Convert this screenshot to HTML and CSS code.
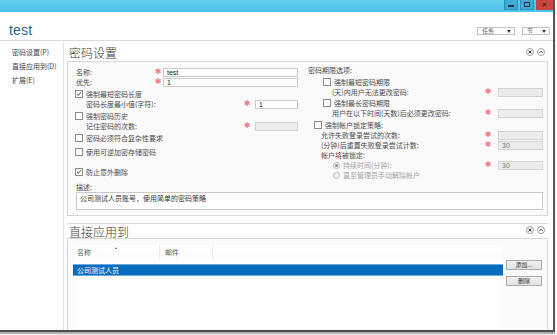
FILE: index.html
```html
<!DOCTYPE html>
<html lang="zh">
<head>
<meta charset="utf-8">
<link rel="stylesheet" href="styles.css">
</head>
<body>
<div class="window">
  <div class="titlebar">
    <div class="wbtn wmin"><span class="minbar"></span></div>
    <div class="wbtn wmax"><span class="maxbox"></span></div>
    <div class="wbtn wclose">&#x2715;</div>
  </div>
  <div class="header">
    <div class="title">test</div>
    <div class="drops">
      <div class="drop drop-task"><span>任务</span><span class="tri"></span></div>
      <div class="drop drop-sec"><span>节</span><span class="tri"></span></div>
    </div>
  </div>
  <div class="content">
    <nav class="nav">
      <div class="nav-item">密码设置(P)</div>
      <div class="nav-item">直接应用到(D)</div>
      <div class="nav-item">扩展(E)</div>
    </nav>
    <main class="main">
      <div class="sec-head sec-head-1">
        <h2 class="sec-title">密码设置</h2>
        <div class="sec-icons">
          <svg class="ic" viewBox="0 0 8 8"><circle cx="4" cy="4" r="3.5" fill="#fff" stroke="#8a8a8a" stroke-width="0.8"/><path d="M2.6 2.6 L5.4 5.4 M5.4 2.6 L2.6 5.4" stroke="#333" stroke-width="1"/></svg>
          <svg class="ic" viewBox="0 0 8 8"><circle cx="4" cy="4" r="3.5" fill="#fff" stroke="#8a8a8a" stroke-width="0.8"/><path d="M2.5 4.9 L4 3.2 L5.5 4.9" fill="none" stroke="#333" stroke-width="0.9"/></svg>
        </div>
      </div>
      <section class="box box-1">
        <div class="form-grid">
          <div class="col-left">
            <div class="row r-first">
              <span class="lbl">名称:</span><span class="star">&#x2731;</span><span class="inp inp-wide">test</span>
            </div>
            <div class="row">
              <span class="lbl">优先:</span><span class="star">&#x2731;</span><span class="inp inp-wide">1</span>
            </div>
            <div class="row mt2">
              <span class="cb checked"><svg viewBox="0 0 8 8"><path d="M1.4 4.1 L3.1 5.9 L6.6 1.7" fill="none" stroke="#333" stroke-width="1.2"/></svg></span><span class="cb-lbl">强制最短密码长度</span>
            </div>
            <div class="row">
              <span class="lbl ind">密码长度最小值(字符):</span><span class="star star-l">&#x2731;</span><span class="inp inp-small">1</span>
            </div>
            <div class="row mt2">
              <span class="cb"></span><span class="cb-lbl">强制密码历史</span>
            </div>
            <div class="row">
              <span class="lbl ind">记住密码的次数:</span><span class="star star-l">&#x2731;</span><span class="inp inp-small dis"></span>
            </div>
            <div class="row mt2">
              <span class="cb"></span><span class="cb-lbl">密码必须符合复杂性要求</span>
            </div>
            <div class="row mt4">
              <span class="cb"></span><span class="cb-lbl">使用可逆加密存储密码</span>
            </div>
            <div class="row mt10">
              <span class="cb checked"><svg viewBox="0 0 8 8"><path d="M1.4 4.1 L3.1 5.9 L6.6 1.7" fill="none" stroke="#333" stroke-width="1.2"/></svg></span><span class="cb-lbl">防止意外删除</span>
            </div>
            <div class="row mt5">
              <span class="lbl">描述:</span>
            </div>
          </div>
          <div class="col-right">
            <div class="row"><span class="lbl">密码期限选项:</span></div>
            <div class="row mt2 ind15">
              <span class="cb"></span><span class="cb-lbl">强制最短密码期限</span>
            </div>
            <div class="row">
              <span class="lbl ind24">(天)内用户无法更改密码:</span><span class="star star-r">&#x2731;</span><span class="inp inp-r dis"></span>
            </div>
            <div class="row mt1 ind15">
              <span class="cb"></span><span class="cb-lbl">强制最长密码期限</span>
            </div>
            <div class="row">
              <span class="lbl ind24">用户在以下时间(天数)后必须更改密码:</span><span class="star star-r">&#x2731;</span><span class="inp inp-r dis"></span>
            </div>
            <div class="row mt2 ind6">
              <span class="cb"></span><span class="cb-lbl">强制帐户锁定策略:</span>
            </div>
            <div class="row">
              <span class="lbl ind13">允许失败登录尝试的次数:</span><span class="star star-r">&#x2731;</span><span class="inp inp-r dis"></span>
            </div>
            <div class="row">
              <span class="lbl ind13">(分钟)后重置失败登录尝试计数:</span><span class="star star-r">&#x2731;</span><span class="inp inp-r dis">30</span>
            </div>
            <div class="row">
              <span class="lbl ind13">帐户将被锁定:</span>
            </div>
            <div class="row ind25">
              <span class="rb on"></span><span class="rb-lbl">持续时间(分钟):</span><span class="star star-r">&#x2731;</span><span class="inp inp-r dis">30</span>
            </div>
            <div class="row ind25">
              <span class="rb"></span><span class="rb-lbl">直至管理员手动解除帐户</span>
            </div>
          </div>
          <div class="desc">公司测试人员账号，使用简单的密码策略</div>
        </div>
      </section>
      <div class="sec-head sec-head-2">
        <h2 class="sec-title">直接应用到</h2>
        <div class="sec-icons">
          <svg class="ic" viewBox="0 0 8 8"><circle cx="4" cy="4" r="3.5" fill="#fff" stroke="#8a8a8a" stroke-width="0.8"/><path d="M2.6 2.6 L5.4 5.4 M5.4 2.6 L2.6 5.4" stroke="#333" stroke-width="1"/></svg>
          <svg class="ic" viewBox="0 0 8 8"><circle cx="4" cy="4" r="3.5" fill="#fff" stroke="#8a8a8a" stroke-width="0.8"/><path d="M2.5 4.9 L4 3.2 L5.5 4.9" fill="none" stroke="#333" stroke-width="0.9"/></svg>
        </div>
      </div>
      <section class="box box-2">
        <div class="list">
          <div class="list-head">
            <div class="lh lh-name">名称<span class="sort"></span></div>
            <div class="lh lh-mail">邮件</div>
            <div class="lh lh-rest"></div>
          </div>
          <div class="list-row sel">公司测试人员</div>
        </div>
        <div class="btns">
          <div class="btn btn-add">添加...</div>
          <div class="btn">删除</div>
        </div>
      </section>
    </main>
  </div>
</div>
</body>
</html>
```

FILE: styles.css
```css
* { box-sizing: border-box; }
html, body { margin: 0; padding: 0; }
body {
  width: 557px;
  height: 335px;
  overflow: hidden;
  background: #fff;
  font-family: "Noto Sans CJK SC", "Noto Sans", sans-serif;
  font-size: 7px;
  color: #4a4a4a;
}
.window {
  width: 555px;
  height: 332px;
  border-right: 2px solid #555;
  border-bottom: 2px solid #4a4a4a;
  box-shadow: 0 2px 1px #b0b0b0;
  display: flex;
  flex-direction: column;
  background: #fff;
}
.titlebar {
  height: 12px;
  flex: none;
  background: linear-gradient(#63cdef, #4cc1e8);
  display: flex;
  justify-content: flex-end;
  align-items: flex-start;
  gap: 2px;
}
.wbtn {
  height: 10px;
  display: flex;
  align-items: center;
  justify-content: center;
}
.wmin, .wmax {
  width: 14px;
  background: #3aaed6;
  border: 1px solid #2a8fb5;
  border-top: none;
}
.minbar { width: 6px; height: 2px; background: #1c3440; margin-top: 3px; }
.maxbox { width: 6px; height: 5px; border: 1.5px solid #1c3440; }
.wclose {
  width: 17px;
  background: #c9473e;
  color: #3a1210;
  font-family: "DejaVu Sans", sans-serif;
  font-size: 7px;
  font-weight: bold;
  line-height: 10px;
}
.header {
  height: 29px;
  flex: none;
  border-bottom: 1px solid #dcdcdc;
  display: flex;
  justify-content: space-between;
  align-items: flex-start;
  padding: 0 3px 0 9px;
}
.title {
  font-family: "Liberation Sans", sans-serif;
  font-size: 14px;
  line-height: 16px;
  margin-top: 10px;
  color: #26698f;
  letter-spacing: 0.2px;
}
.drops { display: flex; gap: 7px; margin-top: 15px; }
.drop {
  height: 8px;
  border: 1px solid #c4c4c4;
  background: #fff;
  display: flex;
  align-items: center;
  justify-content: space-between;
  padding: 0 3px 0 4px;
  font-size: 6px;
  line-height: 6px;
  color: #666;
}
.drop-task { width: 38px; }
.drop-sec { width: 28px; }
.tri {
  width: 0; height: 0;
  border-left: 2.5px solid transparent;
  border-right: 2.5px solid transparent;
  border-top: 3px solid #333;
}
.content { flex: 1; display: flex; min-height: 0; }
.nav {
  width: 64px;
  flex: none;
  border-right: 1px solid #e2e2e2;
  padding: 4px 0 0 12px;
}
.nav-item { line-height: 14px; height: 14px; color: #444; white-space: nowrap; }
.main {
  flex: 1;
  display: flex;
  flex-direction: column;
  padding: 0 5px 0 3px;
  min-width: 0;
}
.sec-head {
  display: flex;
  justify-content: space-between;
  align-items: center;
  flex: none;
}
.sec-head-1 { height: 20px; padding: 4px 0 0 2px; }
.sec-head-2 {
  height: 15px;
  margin-top: 7px;
  border-top: 1px solid #dedede;
  padding: 0 0 0 2px;
}
.sec-title {
  margin: 0;
  font-size: 12px;
  font-weight: 300;
  line-height: 14px;
  color: #3a3a3a;
}
.sec-head-2 .sec-title { margin-top: 2px; }
.sec-icons { display: flex; gap: 3px; padding-right: 3px; margin-top: -2px; }
.ic { width: 8px; height: 8px; display: block; }
.box {
  border: 1px solid #d8d8d8;
  background: #fafafa;
  flex: none;
}
.box-1 { height: 155px; padding: 3px 4px 0 7px; }
.form-grid {
  display: grid;
  grid-template-columns: 223px 235px;
  column-gap: 10px;
}
.row {
  height: 10px;
  display: flex;
  align-items: center;
  white-space: nowrap;
  line-height: 10px;
}
.r-first { margin-top: 2px; }
.mt1 { margin-top: 1px; }
.mt2 { margin-top: 2px; }
.mt4 { margin-top: 4px; }
.mt5 { margin-top: 5px; }
.mt10 { margin-top: 10px; }
.ind15 { padding-left: 15px; }
.ind6 { padding-left: 6px; }
.ind25 { padding-left: 25px; }
.lbl { flex: 1; padding-left: 1px; }
.lbl.ind { padding-left: 11px; }
.lbl.ind24 { padding-left: 24px; }
.lbl.ind13 { padding-left: 13px; }
.col-right .row > .lbl:only-child { padding-left: 0; }
.col-right .row > .lbl.ind13:only-child { padding-left: 13px; }
.star {
  width: 8px;
  margin-right: 1px;
  font-family: "DejaVu Sans", sans-serif;
  font-size: 8px;
  line-height: 10px;
  color: #ec7f88;
  text-align: center;
  flex: none;
}
.star-l { margin-right: 4px; }
.star-r { margin-right: 6px; }
.inp {
  height: 9px;
  border: 1px solid #cbcbcb;
  background: #fff;
  font-family: "Liberation Sans", sans-serif;
  font-size: 7px;
  line-height: 7px;
  padding-left: 3px;
  color: #222;
  flex: none;
}
.inp-wide { width: 135px; }
.inp-small { width: 43px; }
.inp-r { width: 45px; }
.inp.dis { background: #ececec; border-color: #d4d4d4; color: #7a7a7a; }
.cb {
  width: 8px;
  height: 8px;
  border: 1px solid #8c8c8c;
  background: #fff;
  flex: none;
  display: flex;
}
.cb svg { width: 6px; height: 6px; display: block; }
.cb-lbl { margin-left: 3px; }
.rb {
  width: 7px;
  height: 7px;
  border-radius: 50%;
  border: 1px solid #b8b8b8;
  background: #f6f6f6;
  flex: none;
  display: flex;
  align-items: center;
  justify-content: center;
}
.rb.on::after {
  content: "";
  width: 3px;
  height: 3px;
  border-radius: 50%;
  background: #8a8a8a;
}
.rb-lbl { margin-left: 3px; color: #a4a4a4; flex: 1; }
.desc {
  grid-column: 1 / -1;
  margin-left: 1px;
  height: 18px;
  border: 1px solid #c9c9c9;
  background: #fff;
  padding: 1px 0 0 3px;
  line-height: 9px;
  color: #333;
}
.box-2 {
  flex: 1;
  display: flex;
  gap: 3px;
  padding: 6px 5px 2px 5px;
  border-bottom: none;
}
.list {
  width: 430px;
  background: #fff;
  flex: none;
}
.list-head { display: flex; height: 15px; background: linear-gradient(#fff, #fbfbfb); }
.lh { line-height: 15px; padding-left: 4px; color: #5a5a5a; position: relative; }
.lh-name { width: 87px; border-right: 1px solid #ececec; }
.lh-mail { width: 53px; border-right: 1px solid #ececec; padding-left: 5px; }
.lh-rest { flex: 1; }
.sort {
  position: absolute;
  left: 42px;
  top: 2px;
  width: 0; height: 0;
  border-left: 1.5px solid transparent;
  border-right: 1.5px solid transparent;
  border-bottom: 2px solid #555;
}
.list-row {
  height: 12px;
  margin-top: 4px;
  line-height: 10px;
  padding-left: 4px;
}
.list-row.sel {
  background: #0a6cbd;
  border-top: 1px solid #6aa9dc;
  border-bottom: 1px solid #6aa9dc;
  color: #fff;
}
.btns { width: 36px; flex: none; padding-top: 15px; display: flex; flex-direction: column; gap: 6px; }
.btn {
  height: 10px;
  border: 1px solid #ababab;
  background: linear-gradient(#f0f0f0, #e2e2e2);
  text-align: center;
  line-height: 8px;
  font-size: 6px;
  color: #333;
}
```
